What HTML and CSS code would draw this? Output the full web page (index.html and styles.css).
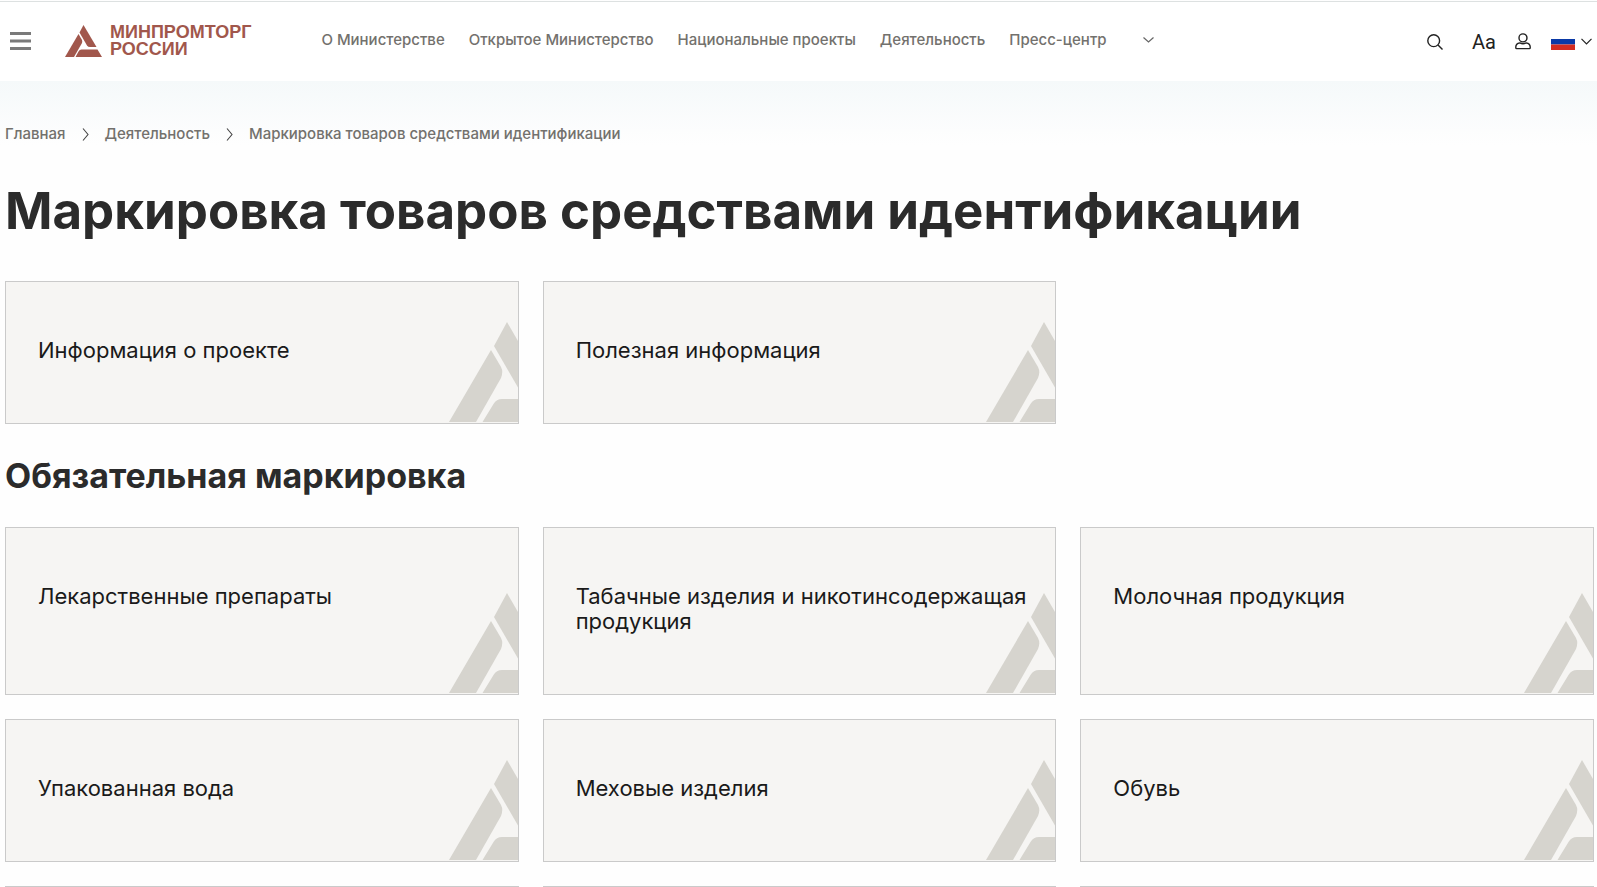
FILE: index.html
```html
<!DOCTYPE html>
<html lang="ru">
<head>
<meta charset="utf-8">
<meta name="viewport" content="width=device-width, initial-scale=1">
<title>Маркировка товаров средствами идентификации</title>
<link rel="stylesheet" href="styles.css">
</head>
<body>
<svg class="sprite" aria-hidden="true">
  <symbol id="mark" viewBox="0 0 69 101">
    <path d="M58 0 L45 24 L69 65.500 V19 Z"/>
    <path d="M42 28 L52 45 Q54.500 50 52 56 L27 100 H0 Z"/>
    <path d="M33.500 100 L44.500 82 Q47.500 77 53 77 H69 V100 Z"/>
  </symbol>
</svg>
<header class="header">
  <button class="icon-button burger" type="button" aria-label="Меню">
    <svg width="22" height="20" viewBox="0 0 22 20"><path d="M0 2.500h21M0 10h21M0 17.500h21" stroke="#7a7a7a" stroke-width="3"/></svg>
  </button>
  <a class="logo" href="#">
    <svg width="37" height="32" viewBox="0 0 37 32" fill="#a1574c" aria-hidden="true">
      <path d="M18.500 0 L14.500 7.500 L22 20.500 Q23 22 25 22 L31.500 22 Z"/>
      <path d="M13.500 9 L17 15 Q17.500 16.500 17 18 L9 32 H0 Z"/>
      <path d="M10.500 32 L13.500 26.500 Q14.500 24.500 16.500 24.500 H32.500 L37 32 Z"/>
    </svg>
    <span class="logo-text">МИНПРОМТОРГ<br>РОССИИ</span>
  </a>
  <nav class="nav" aria-label="Основное меню">
    <a href="#">О Министерстве</a>
    <a href="#">Открытое Министерство</a>
    <a href="#">Национальные проекты</a>
    <a href="#">Деятельность</a>
    <a href="#">Пресс-центр</a>
    <button class="icon-button more" type="button" aria-label="Ещё">
      <svg width="11" height="6" viewBox="0 0 11 6"><path d="M.5.5l5 4.500 5-4.500" fill="none" stroke="#666" stroke-width="1.200"/></svg>
    </button>
  </nav>
  <div class="tools">
    <button class="icon-button search" type="button" aria-label="Поиск">
      <svg width="16" height="16" viewBox="0 0 16 16" fill="none" stroke="#222" stroke-width="1.400"><circle cx="6.700" cy="6.700" r="5.900"/><path d="M11 11l4.500 4.500"/></svg>
    </button>
    <button class="icon-button font-size" type="button">Aa</button>
    <button class="icon-button user" type="button" aria-label="Личный кабинет">
      <svg width="16" height="17" viewBox="0 0 16 17" fill="none" stroke="#222" stroke-width="1.400"><circle cx="8" cy="4.900" r="4"/><path d="M4.800 9.900C2.500 10.300.8 12 .8 14v.8c0 .5.300.8.800.8h12.800c.5 0 .8-.3.800-.8V14c0-2-1.700-3.700-4-4.100-1.900 1-4.500 1-6.400 0z"/></svg>
    </button>
    <button class="icon-button lang" type="button" aria-label="Русский">
      <svg width="24" height="17" viewBox="0 0 24 17"><path fill="#fff" d="M0 0h24v6H0z"/><path fill="#0a39a6" d="M0 6h24v5.500H0z"/><path fill="#d32c20" d="M0 11.500h24V17H0z"/></svg>
      <svg width="11" height="7" viewBox="0 0 11 7"><path d="M.5.800l5 5 5-5" fill="none" stroke="#222" stroke-width="1.200"/></svg>
    </button>
  </div>
</header>
<main class="page">
  <nav class="crumbs" aria-label="Навигационная цепочка">
    <a href="#">Главная</a>
    <svg width="7" height="13" viewBox="0 0 7 13"><path d="M1 .5l5 6-5 6" fill="none" stroke="#444" stroke-width="1.100"/></svg>
    <a href="#">Деятельность</a>
    <svg width="7" height="13" viewBox="0 0 7 13"><path d="M1 .5l5 6-5 6" fill="none" stroke="#444" stroke-width="1.100"/></svg>
    <span>Маркировка товаров средствами идентификации</span>
  </nav>
  <h1 class="title">Маркировка товаров средствами идентификации</h1>
  <div class="grid">
    <a class="card" href="#">Информация о проекте<svg class="mark"><use href="#mark"/></svg></a>
    <a class="card" href="#">Полезная информация<svg class="mark"><use href="#mark"/></svg></a>
  </div>
  <h2 class="subtitle">Обязательная маркировка</h2>
  <div class="grid">
    <a class="card" href="#">Лекарственные препараты<svg class="mark"><use href="#mark"/></svg></a>
    <a class="card" href="#">Табачные изделия и никотинсодержащая продукция<svg class="mark"><use href="#mark"/></svg></a>
    <a class="card" href="#">Молочная продукция<svg class="mark"><use href="#mark"/></svg></a>
    <a class="card" href="#">Упакованная вода<svg class="mark"><use href="#mark"/></svg></a>
    <a class="card" href="#">Меховые изделия<svg class="mark"><use href="#mark"/></svg></a>
    <a class="card" href="#">Обувь<svg class="mark"><use href="#mark"/></svg></a>
    <span class="card"></span>
    <span class="card"></span>
    <span class="card"></span>
  </div>
</main>
</body>
</html>
```
FILE: styles.css
```css
* {
  box-sizing: border-box;
}

html {
  height: 100%;
}

body {
  height: 100%;
  margin: 0;
  overflow: hidden;
  display: flex;
  flex-direction: column;
  background: #fefefe;
  font-family: Inter, "Open Sans", sans-serif;
  color: #2b2b2b;
}

a {
  color: inherit;
  text-decoration: none;
}

svg {
  display: block;
  flex: none;
}

.sprite {
  position: absolute;
  width: 0;
  height: 0;
}

.icon-button {
  display: flex;
  align-items: center;
  padding: 0;
  border: 0;
  background: none;
  color: #222;
  font: inherit;
  cursor: pointer;
}

.header {
  flex: none;
  display: flex;
  align-items: center;
  min-height: 80px;
  margin-top: 1px;
  padding: 0 5px 2px 10px;
  border-top: 1px solid #dde1e1;
  background: #fff;
}

.logo {
  display: flex;
  align-items: center;
  gap: 8px;
  margin-left: 33px;
  color: #a1574c;
}

.logo-text {
  font: bold 18px/17px "Liberation Sans", Arial, sans-serif;
}

.nav {
  display: flex;
  align-items: center;
  gap: 24px;
  margin-left: 70px;
  padding-bottom: 2px;
  font-size: 15px;
  line-height: 20px;
  font-weight: 500;
  color: #73716d;
  white-space: nowrap;
}

.more {
  margin-left: 12px;
}

.tools {
  display: flex;
  align-items: center;
  margin-left: auto;
  padding-top: 2px;
}

.font-size {
  margin: 0 19px 0 29px;
  font: 20px/22px Roboto, sans-serif;
}

.lang {
  gap: 6px;
  margin-left: 20px;
}

.page {
  flex: none;
  padding: 42px 3px 24px 5px;
  background: linear-gradient(#f5f9fa, #fefefe 64px);
}

.crumbs {
  display: flex;
  align-items: center;
  gap: 16px;
  font-size: 15px;
  line-height: 22px;
  font-weight: 500;
  color: #73716d;
}

.title {
  margin: 34px 0 38px;
  font-size: 51px;
  line-height: 64px;
  font-weight: 700;
}

.subtitle {
  margin: 32px 0 31px;
  font-size: 34px;
  line-height: 40px;
  font-weight: 700;
}

.grid {
  display: grid;
  grid-template-columns: repeat(3, 1fr);
  gap: 24px;
}

.card {
  position: relative;
  min-height: 143px;
  padding: 56px 24px 60px 32px;
  overflow: hidden;
  border: 1px solid #cacaca;
  background: #f6f5f3;
  font-size: 22px;
  line-height: 25px;
  color: #1a1a1a;
}

.mark {
  position: absolute;
  right: 0;
  bottom: 0;
  width: 69px;
  height: 101px;
  fill: #d6d4ce;
}
```
